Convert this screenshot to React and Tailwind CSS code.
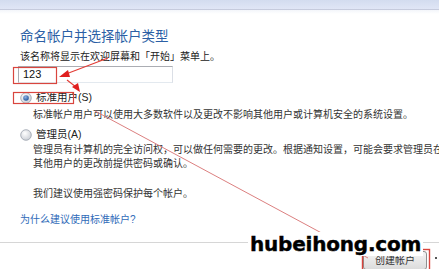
import React from 'react';

const font = { fontFamily: '"Liberation Sans", "Noto Sans CJK SC", sans-serif' };

function Radio({ checked }) {
  return (
    <svg width="12" height="12" viewBox="0 0 12 12" className="shrink-0">
      <defs>
        <radialGradient id={checked ? 'rg1' : 'rg2'} cx="0.4" cy="0.35" r="0.7">
          <stop offset="0" stopColor="#ffffff" />
          <stop offset="1" stopColor="#c9cdd4" />
        </radialGradient>
        <radialGradient id="dot" cx="0.4" cy="0.35" r="0.7">
          <stop offset="0" stopColor="#8fb5e6" />
          <stop offset="1" stopColor="#1d4f97" />
        </radialGradient>
      </defs>
      <circle cx="6" cy="6" r="5.3" fill={`url(#${checked ? 'rg1' : 'rg2'})`} stroke="#9aa1ac" strokeWidth="0.8" />
      {checked && <circle cx="6" cy="6" r="2.8" fill="url(#dot)" />}
    </svg>
  );
}

function Annotations() {
  return (
    <svg className="absolute inset-0 pointer-events-none" width="439" height="269" viewBox="0 0 439 269">
      {/* boxes */}
      <rect x="13.5" y="67.5" width="43" height="16" fill="none" stroke="#d9453e" strokeWidth="1.2" />
      <rect x="13.5" y="92.5" width="60" height="11" fill="none" stroke="#d9453e" strokeWidth="1.2" />
      <rect x="362.5" y="249.5" width="67" height="22" fill="none" stroke="#d9453e" strokeWidth="1.4" />
      {/* arrow 1 */}
      <line x1="108" y1="58" x2="66" y2="74" stroke="#e23b34" strokeWidth="1.1" />
      <polygon points="59,77 68,70 70,77" fill="#e01f1f" />
      {/* arrow 2 */}
      <line x1="67" y1="80" x2="76" y2="87" stroke="#e23b34" strokeWidth="1.1" />
      <polygon points="80,92 72,87 78,83" fill="#e01f1f" />
      {/* long line */}
      <line x1="95" y1="111" x2="368" y2="258" stroke="#dc8080" strokeWidth="1" />
    </svg>
  );
}

export default function App() {
  return (
    <div className="relative w-[439px] h-[269px] overflow-hidden bg-white" style={font}>
      <div className="h-[10px] bg-gradient-to-b from-[#d3dcef] to-[#e0e6f6] border-b border-[#c6cbdd]" />
      <div className="h-[4px] bg-gradient-to-b from-[#f3f5fa] to-white" />

      <div className="pl-[20px] pr-0">
        <div className="mt-[14px] h-[18px] flex items-center text-[13.5px] text-[#2b5fa5] leading-none whitespace-nowrap">
          命名帐户并选择帐户类型
        </div>
        <div className="mt-[4px] h-[14px] flex items-center text-[10px] text-[#222] leading-none whitespace-nowrap">
          该名称将显示在欢迎屏幕和「开始」菜单上。
        </div>
        <div className="mt-[2px] ml-[-2px] w-[155px] h-[17px] border border-[#abadb3] border-b-[#e3e9ef] border-r-[#dbdfe6] flex items-center pl-[4px] text-[11px] text-[#111]">
          123
        </div>

        <div className="mt-[8px] h-[14px] flex items-center gap-[4px] text-[10.5px] text-[#222] whitespace-nowrap">
          <Radio checked />
          <span>标准用户(S)</span>
        </div>
        <div className="mt-[2px] ml-[13px] h-[14px] flex items-center text-[10px] text-[#333] whitespace-nowrap">
          标准帐户用户可以使用大多数软件以及更改不影响其他用户或计算机安全的系统设置。
        </div>

        <div className="mt-[7px] h-[14px] flex items-center gap-[4px] text-[10.5px] text-[#222] whitespace-nowrap">
          <Radio />
          <span>管理员(A)</span>
        </div>
        <div className="mt-[1px] ml-[13px] h-[13px] flex items-center text-[10px] text-[#333] whitespace-nowrap overflow-hidden">
          管理员有计算机的完全访问权，可以做任何需要的更改。根据通知设置，可能会要求管理员在
        </div>
        <div className="mt-[1px] ml-[13px] h-[13px] flex items-center text-[10px] text-[#333] whitespace-nowrap">
          其他用户的更改前提供密码或确认。
        </div>

        <div className="mt-[16px] ml-[13px] h-[14px] flex items-center text-[10px] text-[#333] whitespace-nowrap">
          我们建议使用强密码保护每个帐户。
        </div>
        <div className="mt-[12px] h-[14px] flex items-center text-[10px] text-[#2f6ab8] whitespace-nowrap">
          为什么建议使用标准帐户?
        </div>
      </div>

      <div className="mt-[16px] h-px bg-[#d6d6d6]" />

      <div className="flex items-start justify-end pr-[2px] pt-[8px]">
        <button className="w-[64px] h-[19px] rounded-[3px] border border-[#8e8f8f] bg-gradient-to-b from-[#f4f4f4] to-[#dcdcdc] text-[10px] text-[#333] leading-none">
          创建帐户
        </button>
        <div className="ml-[8px] mt-[6px] w-[2px] h-[2px] bg-[#555]" />
      </div>

      <Annotations />

      <div
        className="absolute left-[248px] top-[232px] px-[2px] bg-white text-[20px] font-bold text-black leading-[24px] tracking-[-0.2px] [-webkit-text-stroke:0.4px_black]"
        style={{ fontFamily: '"DejaVu Sans", sans-serif' }}
      >
        hubeihong.com
      </div>
    </div>
  );
}
